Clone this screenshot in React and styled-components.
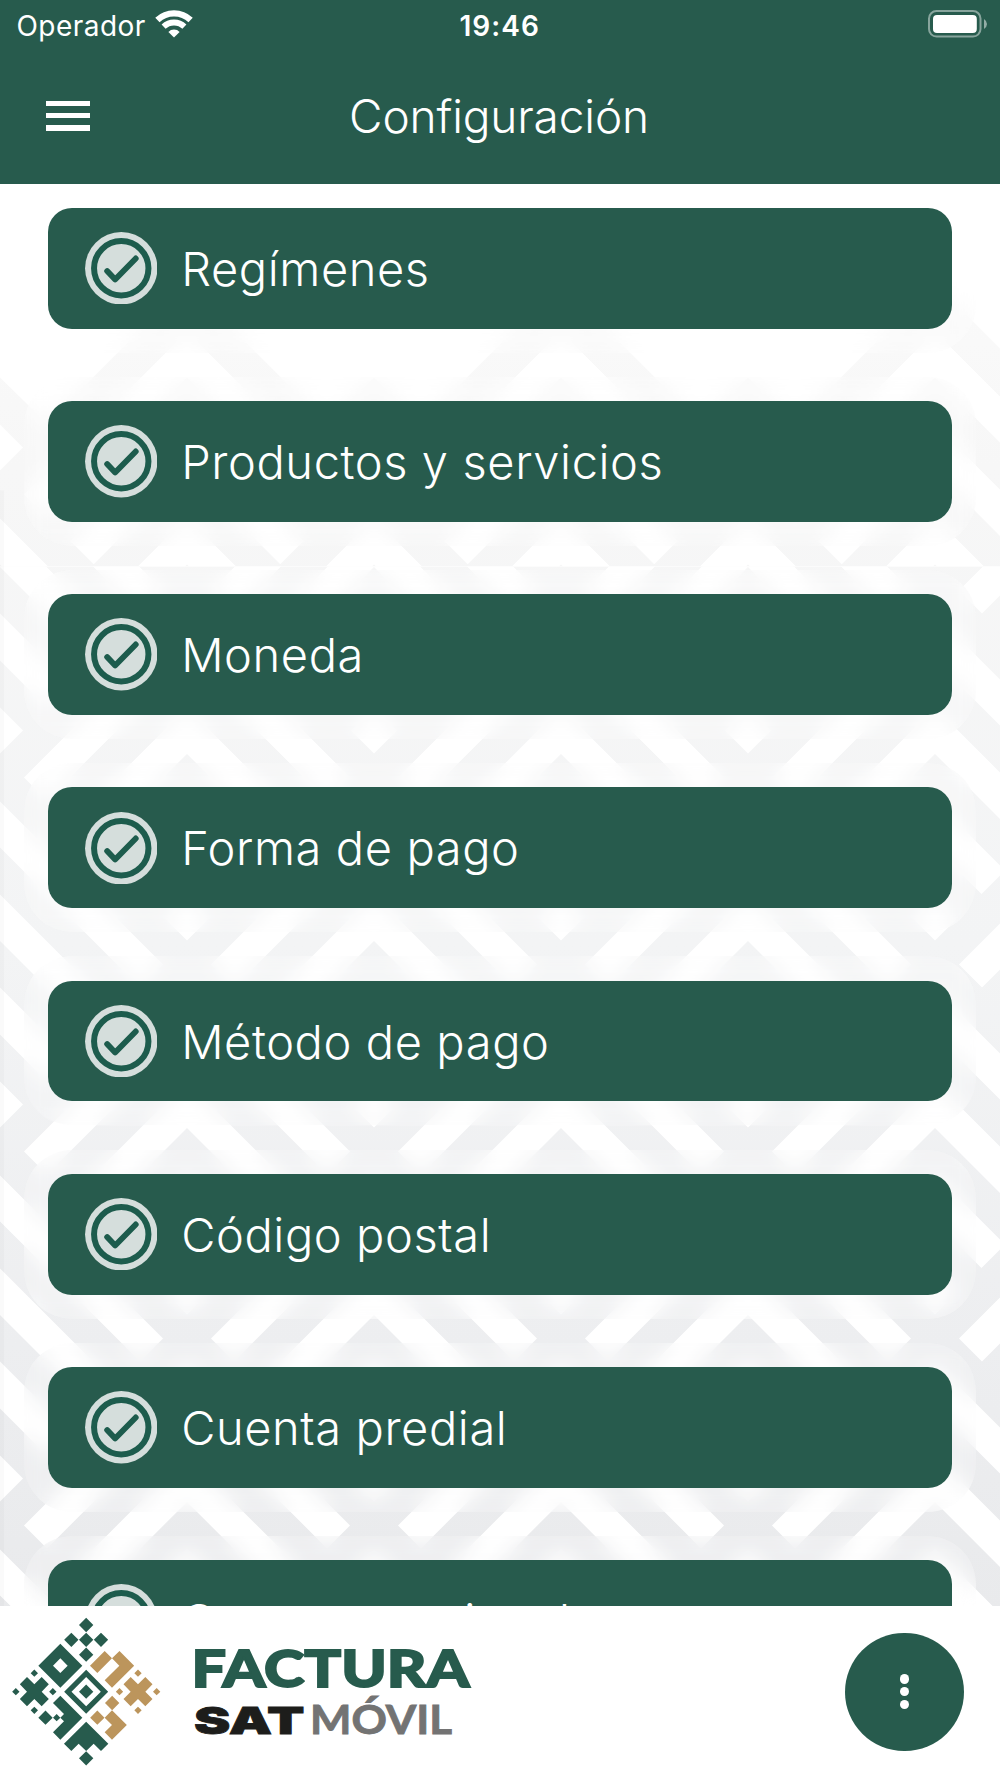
import React from "react";
import styled, { createGlobalStyle } from "styled-components";

const GREEN = "#275b4d";
const TAN = "#bc955c";

const GlobalStyle = createGlobalStyle`
  * {
    box-sizing: border-box;
  }
  body {
    margin: 0;
    background-color: #fff;
    font-family: Inter, "Liberation Sans", sans-serif;
  }
`;

const Screen = styled.div`
  width: 1000px;
  height: 1778px;
  display: flex;
  flex-direction: column;
  overflow: hidden;
`;

const Header = styled.header`
  height: 183.6px;
  flex: none;
  background-color: ${GREEN};
  color: #fff;
`;

const StatusBar = styled.div`
  height: 48px;
  padding: 3px 12px 0 16.5px;
  display: grid;
  grid-template-columns: 1fr auto 1fr;
  align-items: center;

  .carrier {
    display: flex;
    align-items: center;
    gap: 9px;
    font-size: 28px;
    letter-spacing: 0.45px;
  }
  .time {
    margin-left: -5px;
    font-size: 28px;
    font-weight: 600;
    letter-spacing: 1.1px;
  }
  .battery {
    justify-self: end;
    display: flex;
  }
  svg {
    display: block;
    margin-top: -3px;
  }
`;

const NavBar = styled.div`
  height: 135px;
  padding: 0 46px;
  display: grid;
  grid-template-columns: 1fr auto 1fr;
  align-items: center;

  h1 {
    margin: 0 0 0 -2px;
    font-size: 46px;
    font-weight: 300;
    letter-spacing: -0.15px;
  }
`;

const MenuButton = styled.button`
  width: 44px;
  height: 30px;
  padding: 0;
  border: 0;
  background: none;
  display: flex;
  flex-direction: column;
  justify-content: space-between;

  span {
    width: 100%;
    height: 5.6px;
    background-color: #fff;
  }
`;

const Content = styled.main`
  position: relative;
  height: 1422px;
  flex: none;
  overflow: hidden;

  .pattern {
    position: absolute;
    top: 0;
    left: 0;
    display: block;
  }
`;

const List = styled.ul`
  position: relative;
  margin: 0;
  padding: 0 24.15px;
  list-style: none;
  display: flex;
  flex-direction: column;
  gap: 24.15px;
`;

// frosted frame around every option
const Frame = styled.li`
  padding: 24.15px;
  border-radius: 48px;
  background-color: rgba(255, 255, 255, 0.2);
  backdrop-filter: blur(10px);
`;

const Option = styled.div`
  height: 120.8px;
  padding-left: 36.4px;
  border-radius: 24px;
  background-color: ${GREEN};
  color: #fff;
  display: flex;
  align-items: center;
  gap: 24px;
  font-size: 47px;
  font-weight: 300;
  letter-spacing: 0.6px;
  white-space: nowrap;
`;

const Footer = styled.footer`
  flex: 1;
  padding-right: 36px;
  background-color: #fff;
  display: flex;
  align-items: center;
  justify-content: space-between;
`;

const Fab = styled.button`
  width: 118.6px;
  height: 118.6px;
  padding: 0;
  border: 0;
  border-radius: 50%;
  background-color: ${GREEN};
  display: flex;
  flex-direction: column;
  align-items: center;
  justify-content: center;
  gap: 3.6px;

  span {
    width: 9.2px;
    height: 9.2px;
    border-radius: 50%;
    background-color: #fff;
  }
`;

const options = [
  "Regímenes",
  "Productos y servicios",
  "Moneda",
  "Forma de pago",
  "Método de pago",
  "Código postal",
  "Cuenta predial",
  "Campos opcionales"
];

const WifiIcon = () => (
  <svg width="38" height="28" viewBox="-19 -27.5 38 28" fill="none">
    <path d="M-16.6 -17.4A24 24 0 0 1 16.6 -17.4" stroke="#fff" strokeWidth="6.2" />
    <path d="M-10.4 -10.8A15 15 0 0 1 10.4 -10.8" stroke="#fff" strokeWidth="5.8" />
    <path d="M0 0L-5.6 -5.6A8 8 0 0 1 5.6 -5.6Z" fill="#fff" />
  </svg>
);

const BatteryIcon = () => (
  <svg width="60" height="28" viewBox="0 0 60 28">
    <rect x="1" y="1" width="51.5" height="25.6" rx="7.5" fill="none" stroke="#fff" strokeOpacity="0.45" strokeWidth="2" />
    <rect x="5" y="5" width="43.8" height="18" rx="4" fill="#fff" />
    <path d="M56 9Q59 11 59 14T56 19Z" fill="#fff" fillOpacity="0.5" />
  </svg>
);

const CheckIcon = () => (
  <svg width="72.5" height="72.5" viewBox="-36.25 -36.25 72.5 72.5">
    <circle r="36.2" fill="#d5dedc" />
    <circle r="27.2" fill="none" stroke="#1d5c4d" strokeWidth="6" />
    <path
      d="M-14.1 2.8L-6.1 11.2L14.5 -9.8"
      fill="none"
      stroke="#1d5c4d"
      strokeWidth="5.8"
      strokeLinecap="round"
      strokeLinejoin="round"
    />
  </svg>
);

// nested chevrons of one cell, measured up from the bottom corner
const bands = [[24, 70], [117, 164], [210.5, 257], [304, 350]];

const chevron = ([a, b]) => {
  const bx = (b - 24) / 2;
  const by = -(b + 24) / 2;
  const ax = (a - 24) / 2;
  const ay = -(a + 24) / 2;
  return `M0 ${-b}L${bx} ${by}L${ax} ${ay}L0 ${-a}L${-ax} ${ay}L${-bx} ${by}Z`;
};

const cell = bands.map(chevron).join("");

const cellsFrom = (firstRow, rows) => {
  const cells = [];
  for (let row = 0; row < rows; row++) {
    for (let col = 0; col < 4; col++) {
      const shift = row % 2 ? 0 : 187;
      cells.push([col * 374 + shift, firstRow + row * 187]);
    }
  }
  return cells;
};

const Chevrons = ({ cells }) =>
  cells.map(([x, y]) => <path key={`${x}-${y}`} d={cell} transform={`translate(${x} ${y})`} fill="#fff" />);

// outline of the topmost row of peaks
const peaks =
  "M-374 470L-187 283L-47 423L0 377L47 423L187 283L327 423L374 377L421 423L561 283L701 423L748 377L795 423L935 283L1122 470V566H-374Z";

const Pattern = () => (
  <svg className="pattern" width="1000" height="1422.4" viewBox="0 183.6 1000 1422.4">
    <defs>
      <linearGradient id="shade" gradientUnits="userSpaceOnUse" x1="0" y1="280" x2="0" y2="1610">
        <stop offset="0" stopColor="#fafafa" />
        <stop offset="0.14" stopColor="#f7f7f7" />
        <stop offset="0.5" stopColor="#f3f4f5" />
        <stop offset="0.8" stopColor="#edeef0" />
        <stop offset="1" stopColor="#e9eaec" />
      </linearGradient>
      <clipPath id="upper">
        <rect x="0" y="183" width="1000" height="383" />
      </clipPath>
      <clipPath id="lower">
        <rect x="0" y="566" width="1000" height="1040" />
      </clipPath>
    </defs>
    <g clipPath="url(#upper)">
      <path d={peaks} fill="url(#shade)" />
      <Chevrons cells={cellsFrom(681, 3)} />
    </g>
    <g clipPath="url(#lower)">
      <rect x="0" y="566" width="1000" height="1040" fill="url(#shade)" />
      <Chevrons cells={cellsFrom(590, 9)} />
    </g>
    <g clipPath="url(#upper)">
      <path
        d="M0 424L23 447L0 470L-23 447ZM374 424L397 447L374 470L351 447ZM748 424L771 447L748 470L725 447Z"
        fill="#fff"
      />
    </g>
    <rect x="0" y="490" width="4" height="1116" fill="#000" fillOpacity="0.018" />
  </svg>
);

const diamond = (x, y, r) => `M${x} ${y - r}L${x + r} ${y}L${x} ${y + r}L${x - r} ${y}Z`;

const cross = x =>
  `M${x - 22} 201l22 22l22 -22l21.5 22l-21.5 22l21.5 22l-21.5 22l-22 -22l-22 22l-21.5 -22l21.5 -22l-21.5 -22Z`;

const greenShapes = [
  diamond(258.5, 45, 21.5),
  diamond(214, 89.5, 21.5),
  diamond(258.5, 89.5, 21.5),
  diamond(303, 89.5, 21.5),
  diamond(258.5, 134, 21.5),
  diamond(181, 167, 66),
  diamond(181, 167, 22),
  diamond(258.5, 245, 66),
  diamond(258.5, 245, 44),
  diamond(258.5, 245, 21.5),
  cross(103),
  diamond(103, 189.5, 11),
  diamond(47.5, 245, 11),
  diamond(158.5, 245, 11),
  diamond(103, 301, 11),
  "M181 257L247 323L181 389L159 367L192 334L181 323L192 312L159 279Z",
  diamond(136.5, 323, 21.5),
  diamond(170, 323, 11),
  "M258.5 335L325 401L303 423L281 401L258.5 423L236 401L214 423L192 401Z",
  diamond(258.5, 445, 21.5)
].join("");

const tanShapes = [
  "M314 123L336 145L292 189L270 167Z",
  "M358.5 123L402.5 167L336 233L314 211L358 167L336 145Z",
  cross(414),
  diamond(414, 189.5, 11),
  diamond(358.5, 245, 11),
  diamond(470, 245, 11),
  diamond(414, 301, 11),
  diamond(336.5, 279, 21.5),
  diamond(292, 323, 21.5),
  "M336 301L380.5 345L336 389L314 367L336 345L314 323Z"
].join("");

const LogoText = styled.text`
  font-family: ${props => props.$family}, sans-serif;
  font-weight: ${props => props.$weight};
  font-size: ${props => props.$size}px;
  fill: ${props => props.$color};
  stroke: ${props => props.$color};
  stroke-width: ${props => props.$stroke || 0}px;
`;

const Logo = () => (
  <svg width="500" height="172" viewBox="0 1606 500 172">
    <g transform="translate(0 1610) scale(0.33333)">
      <path d={greenShapes} fill={GREEN} fillRule="evenodd" />
      <path d={tanShapes} fill={TAN} />
    </g>
    <LogoText
      x="191.5"
      y="1687.3"
      textLength="278"
      lengthAdjust="spacingAndGlyphs"
      $family="Lato"
      $weight={900}
      $size={52}
      $color={GREEN}
      $stroke={1.8}
    >
      FACTURA
    </LogoText>
    <LogoText
      x="194"
      y="1733.6"
      textLength="110.5"
      lengthAdjust="spacingAndGlyphs"
      $family="Inter"
      $weight={900}
      $size={37.5}
      $color="#1d1d1b"
      $stroke={0.8}
    >
      SAT
    </LogoText>
    <LogoText
      x="310"
      y="1734.4"
      textLength="142"
      lengthAdjust="spacingAndGlyphs"
      $family="Lato"
      $weight={700}
      $size={39.5}
      $color="#737373"
      $stroke={0.9}
    >
      MÓVIL
    </LogoText>
  </svg>
);

const App = () => (
  <>
    <GlobalStyle />
    <Screen>
      <Header>
        <StatusBar>
          <div className="carrier">
            Operador
            <WifiIcon />
          </div>
          <div className="time">19:46</div>
          <div className="battery">
            <BatteryIcon />
          </div>
        </StatusBar>
        <NavBar>
          <MenuButton aria-label="Menú">
            <span />
            <span />
            <span />
          </MenuButton>
          <h1>Configuración</h1>
        </NavBar>
      </Header>
      <Content>
        <Pattern />
        <List>
          {options.map(label => (
            <Frame key={label}>
              <Option>
                <CheckIcon />
                {label}
              </Option>
            </Frame>
          ))}
        </List>
      </Content>
      <Footer>
        <Logo />
        <Fab aria-label="Más opciones">
          <span />
          <span />
          <span />
        </Fab>
      </Footer>
    </Screen>
  </>
);

export default App;
